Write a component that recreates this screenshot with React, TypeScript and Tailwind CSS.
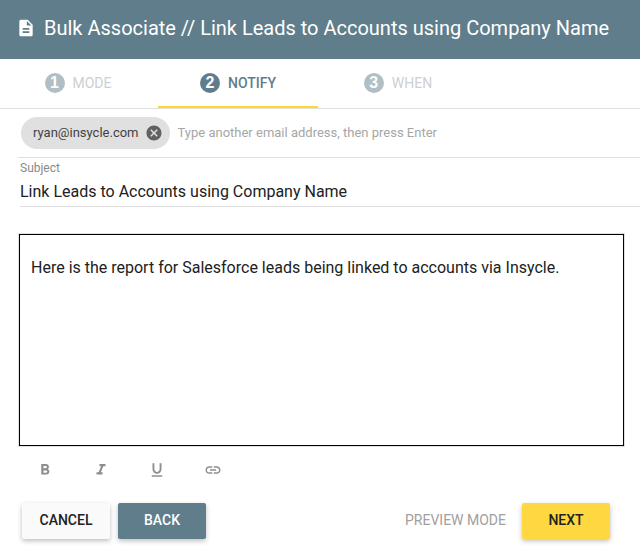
import { useState } from "react";
import type { ReactNode } from "react";
import clsx from "clsx";
import {
  MdCancel,
  MdDescription,
  MdFormatBold,
  MdFormatItalic,
  MdFormatUnderlined,
  MdLink,
} from "react-icons/md";

interface Step {
  number: number;
  label: string;
}

const steps: Step[] = [
  { number: 1, label: "MODE" },
  { number: 2, label: "NOTIFY" },
  { number: 3, label: "WHEN" },
];

interface Tool {
  name: string;
  icon: ReactNode;
}

const tools: Tool[] = [
  { name: "Bold", icon: <MdFormatBold size={18} /> },
  { name: "Italic", icon: <MdFormatItalic size={18} /> },
  { name: "Underline", icon: <MdFormatUnderlined size={18} /> },
  { name: "Link", icon: <MdLink size={18} /> },
];

const raised =
  "h-9 w-22 rounded-xs pb-0.5 text-sm font-medium shadow-[0_2px_5px_0_rgba(0,0,0,0.26)]";

const App = () => {
  const [activeStep, setActiveStep] = useState<number>(2);
  const [recipients, setRecipients] = useState<string[]>(["ryan@insycle.com"]);
  const [email, setEmail] = useState<string>("");
  const [subject, setSubject] = useState<string>(
    "Link Leads to Accounts using Company Name"
  );
  const [message, setMessage] = useState<string>(
    "Here is the report for Salesforce leads being linked to accounts via Insycle."
  );

  const addRecipient = () => {
    if (!email.trim()) return;
    setRecipients([...recipients, email.trim()]);
    setEmail("");
  };

  return (
    <div className="min-h-screen bg-white font-['Roboto',sans-serif] text-[#212121]">
      <header className="flex h-[59px] items-center gap-2 bg-[#607d8b] px-4 pb-1 text-white">
        <MdDescription size={20} className="shrink-0" />
        <h1 className="text-xl whitespace-nowrap">
          Bulk Associate // Link Leads to Accounts using Company Name
        </h1>
      </header>

      <nav className="flex h-[50px] border-b border-[#e0e0e0]">
        {steps.map((step) => {
          const active = step.number === activeStep;
          return (
            <button
              key={step.number}
              type="button"
              onClick={() => setActiveStep(step.number)}
              className={clsx(
                "flex w-40 items-center justify-center gap-2 border-b-2 text-sm first:-ml-0.5",
                active
                  ? "border-[#fdd835] font-medium text-[#607d8b]"
                  : "border-transparent text-[#cfcfcf]"
              )}
            >
              <span
                className={clsx(
                  "flex size-5 items-center justify-center rounded-full font-['Liberation_Sans',sans-serif] text-base font-bold text-white",
                  active ? "bg-[#607d8b]" : "bg-[#b0bec5]"
                )}
              >
                {step.number}
              </span>
              {step.label}
            </button>
          );
        })}
      </nav>

      <main>
        <div className="ml-[18px] flex h-[49px] items-center gap-2 border-b border-[#e0e0e0] pl-[3px]">
          {recipients.map((recipient) => (
            <span
              key={recipient}
              className="flex h-8 items-center gap-1.5 rounded-full bg-[#e0e0e0] pr-[7px] pl-3 text-[13px] text-[#424242]"
            >
              {recipient}
              <button
                type="button"
                aria-label={`Remove ${recipient}`}
                onClick={() =>
                  setRecipients(recipients.filter((r) => r !== recipient))
                }
                className="text-[#616161]"
              >
                <MdCancel size={18} />
              </button>
            </span>
          ))}
          <input
            type="email"
            aria-label="Email address"
            placeholder="Type another email address, then press Enter"
            value={email}
            onChange={(e) => setEmail(e.target.value)}
            onKeyDown={(e) => e.key === "Enter" && addRecipient()}
            className="min-w-0 flex-1 text-[13px] outline-none placeholder:text-[#a6a6a6]"
          />
        </div>

        <div className="ml-5 flex h-[49px] flex-col border-b border-[#e0e0e0] pt-0.5">
          <label htmlFor="subject" className="text-xs text-[#8a8a8a]">
            Subject
          </label>
          <input
            id="subject"
            value={subject}
            onChange={(e) => setSubject(e.target.value)}
            className="flex-1 pt-0.5 text-base outline-none"
          />
        </div>

        <div className="mt-[26px] mr-[15px] ml-[18px]">
          <textarea
            aria-label="Message"
            value={message}
            onChange={(e) => setMessage(e.target.value)}
            className="block h-[214px] w-full resize-none border border-[#e0e0e0] px-3 py-[22px] text-base -outline-offset-2 outline-1 outline-solid outline-black"
          />
        </div>

        <div className="flex gap-5 px-[27px] pt-[5px]">
          {tools.map((tool) => (
            <button
              key={tool.name}
              type="button"
              aria-label={tool.name}
              className="flex size-9 items-center justify-center text-[#8e8e8e]"
            >
              {tool.icon}
            </button>
          ))}
        </div>
      </main>

      <footer className="flex items-center gap-2 pt-[15px] pr-[30px] pb-3 pl-[22px]">
        <button type="button" className={clsx(raised, "bg-[#fafafa]")}>
          CANCEL
        </button>
        <button type="button" className={clsx(raised, "bg-[#607d8b] text-white")}>
          BACK
        </button>
        <button
          type="button"
          className="ml-auto px-2 pb-0.5 text-sm text-[#a0a0a0]"
        >
          PREVIEW MODE
        </button>
        <button type="button" className={clsx(raised, "bg-[#ffd740]")}>
          NEXT
        </button>
      </footer>
    </div>
  );
};

export default App;
